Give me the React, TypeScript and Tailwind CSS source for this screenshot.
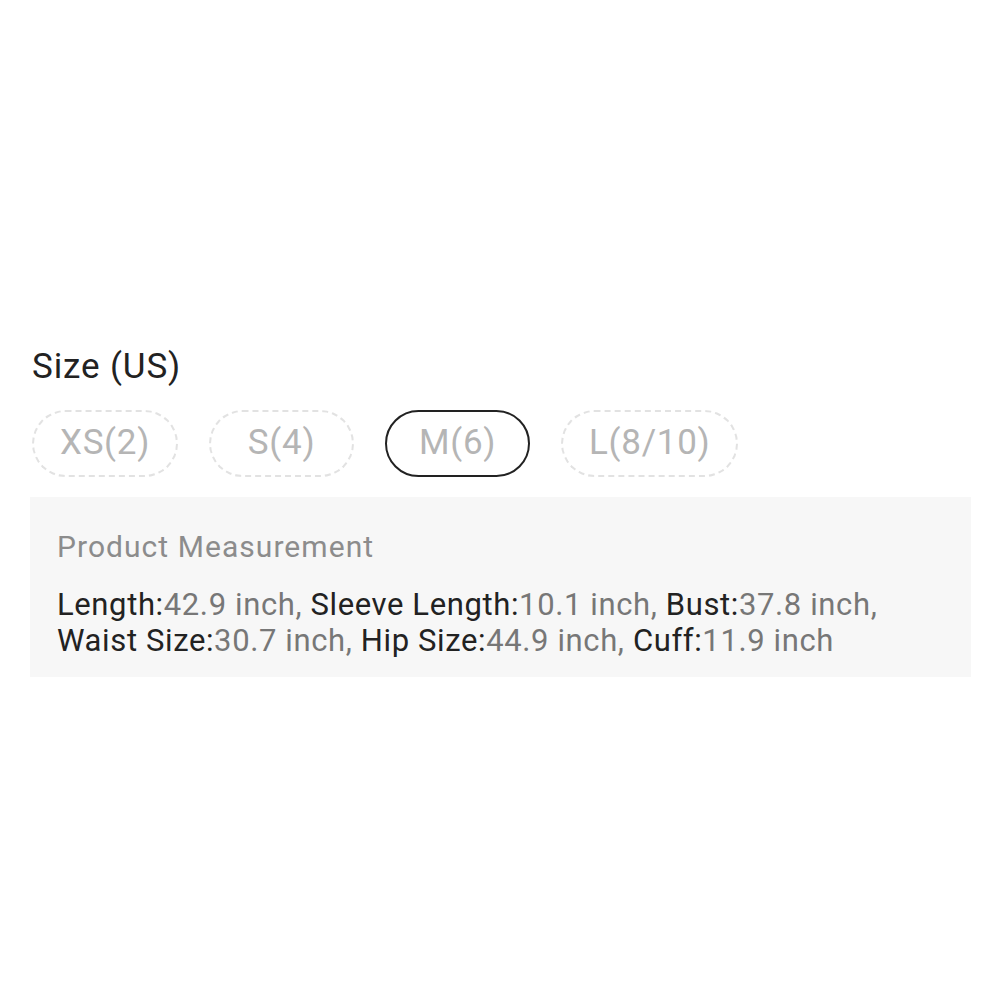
const sizes = [
  { label: "XS(2)", selected: false },
  { label: "S(4)", selected: false },
  { label: "M(6)", selected: true },
  { label: "L(8/10)", selected: false },
];

const measurements = [
  { name: "Length", value: "42.9 inch" },
  { name: "Sleeve Length", value: "10.1 inch" },
  { name: "Bust", value: "37.8 inch" },
  { name: "Waist Size", value: "30.7 inch" },
  { name: "Hip Size", value: "44.9 inch" },
  { name: "Cuff", value: "11.9 inch" },
];

export default function App() {
  return (
    <div
      className="w-[1000px] h-[1000px] bg-white pt-[343px] pl-[30px] pr-[29px]"
      style={{ fontFamily: "Roboto, 'Noto Sans', sans-serif" }}
    >
      <div className="pl-[2px] text-[35px] leading-[48px] tracking-[0.025em] text-[#222]">Size (US)</div>
      <div className="mt-[19px] flex gap-[31px] pl-[2px]">
        {sizes.map((s) => (
          <div
            key={s.label}
            className={
              s.selected
                ? "h-[67px] min-w-[145px] px-[26px] flex items-center justify-center rounded-full border-[2px] border-[#222] text-[35px] tracking-[0.02em] text-[#b5b5b5]"
                : "h-[67px] min-w-[145px] px-[26px] flex items-center justify-center rounded-full border-[2px] border-dashed border-[#e2e2e2] text-[35px] tracking-[0.02em] text-[#b5b5b5]"
            }
          >
            {s.label}
          </div>
        ))}
      </div>
      <div className="mt-[20px] bg-[#f7f7f7] h-[180px] pl-[27px] pt-[32px]">
        <div className="text-[30px] leading-[36px] tracking-[0.035em] text-[#8c8c8c]">Product Measurement</div>
        <div className="mt-[22px] text-[31px] leading-[36px] tracking-[0.02em] text-[#222] w-[880px]">
          {measurements.map((m, i) => (
            <span key={m.name}>
              {m.name}:<span className="text-[#777]">{m.value}{i < measurements.length - 1 ? ", " : ""}</span>
            </span>
          ))}
        </div>
      </div>
    </div>
  );
}
